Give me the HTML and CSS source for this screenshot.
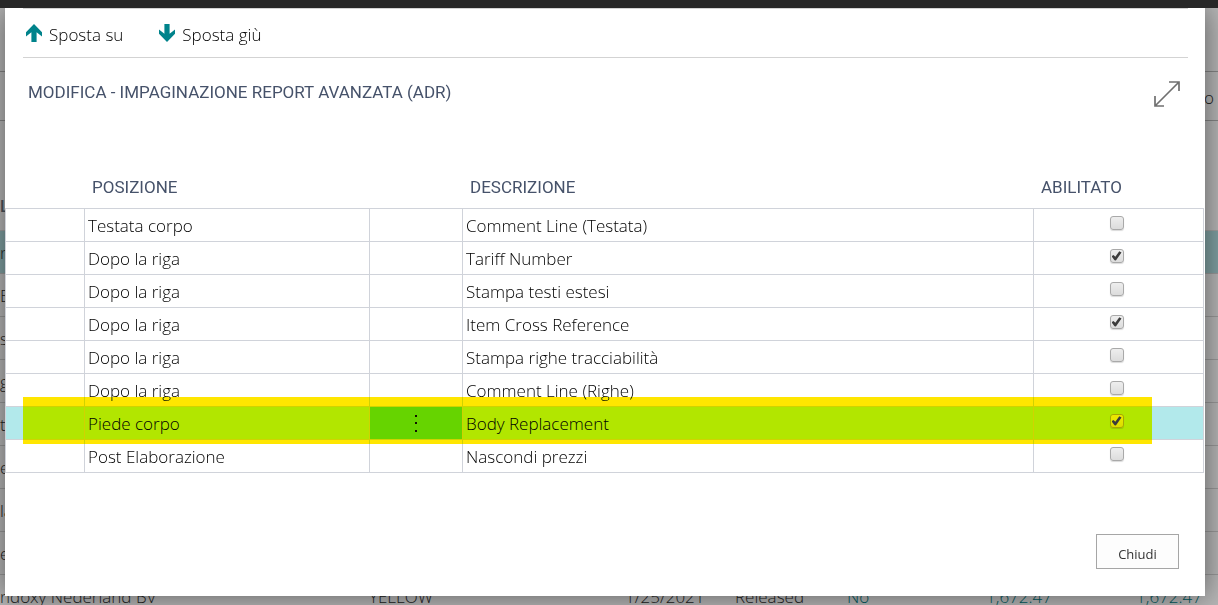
FILE: index.html
```html
<!DOCTYPE html>
<html lang="it">
<head>
<meta charset="utf-8">
<title>Modifica - Impaginazione report avanzata (ADR)</title>
<link rel="stylesheet" href="styles.css">
</head>
<body>
<div class="topbar"></div>
<main class="page" inert>
  <div class="page-band"></div>
  <div class="page-tabs"><span>o</span></div>
  <div class="page-head">L</div>
  <div class="page-row page-row-current">n</div>
  <div class="page-row">E</div>
  <div class="page-row">s</div>
  <div class="page-row">g</div>
  <div class="page-row">t</div>
  <div class="page-row">e</div>
  <div class="page-row">la</div>
  <div class="page-row">ev</div>
  <div class="page-row page-row-full">
    <span>ndoxy Nederland BV</span><span>YELLOW</span><span>1/25/2021</span><span>Released</span><span class="link">No</span><span class="link amount">1,672.47</span><span class="link amount">1,672.47</span>
  </div>
</main>

<section class="dialog" role="dialog" aria-labelledby="dialog-title">
  <div class="toolbar">
    <button class="action" type="button">
      <svg class="action-icon" viewBox="0 0 16 18" aria-hidden="true"><path d="M8 0 16 8.2V12.6L10.6 8.3V18H5.4V8.3L0 12.6V8.2Z"/></svg>
      Sposta su
    </button>
    <button class="action" type="button">
      <svg class="action-icon" viewBox="0 0 16 18" aria-hidden="true"><path d="M8 18 16 9.8V5.4L10.6 9.7V0H5.4V9.7L0 5.4V9.8Z"/></svg>
      Sposta giù
    </button>
  </div>
  <header class="dialog-head">
    <h1 class="dialog-title" id="dialog-title">MODIFICA - IMPAGINAZIONE REPORT AVANZATA (ADR)</h1>
    <button class="expand" type="button" aria-label="Espandi">
      <svg viewBox="0 0 26 26" aria-hidden="true"><path d="M1.5 24.5 24.5 1.5M15 1H25V10M1 15V25H10"/></svg>
    </button>
  </header>
  <table class="grid">
    <colgroup><col class="col-mark"><col class="col-position"><col class="col-menu"><col><col class="col-enabled"></colgroup>
    <thead>
      <tr><th></th><th scope="col">POSIZIONE</th><th></th><th scope="col">DESCRIZIONE</th><th scope="col">ABILITATO</th></tr>
    </thead>
    <tbody>
      <tr><td></td><td>Testata corpo</td><td></td><td>Comment Line (Testata)</td><td class="enabled"><input class="check" type="checkbox" aria-label="Abilitato: Comment Line (Testata)"></td></tr>
      <tr><td></td><td>Dopo la riga</td><td></td><td>Tariff Number</td><td class="enabled"><input class="check" type="checkbox" checked aria-label="Abilitato: Tariff Number"></td></tr>
      <tr><td></td><td>Dopo la riga</td><td></td><td>Stampa testi estesi</td><td class="enabled"><input class="check" type="checkbox" aria-label="Abilitato: Stampa testi estesi"></td></tr>
      <tr><td></td><td>Dopo la riga</td><td></td><td>Item Cross Reference</td><td class="enabled"><input class="check" type="checkbox" checked aria-label="Abilitato: Item Cross Reference"></td></tr>
      <tr><td></td><td>Dopo la riga</td><td></td><td>Stampa righe tracciabilità</td><td class="enabled"><input class="check" type="checkbox" aria-label="Abilitato: Stampa righe tracciabilità"></td></tr>
      <tr><td></td><td>Dopo la riga</td><td></td><td>Comment Line (Righe)</td><td class="enabled"><input class="check" type="checkbox" aria-label="Abilitato: Comment Line (Righe)"></td></tr>
      <tr class="selected"><td><span class="marker"></span></td><td>Piede corpo</td><td class="menu-cell"><button class="row-menu" type="button" aria-label="Altre opzioni"><svg viewBox="0 0 3 17" aria-hidden="true"><path d="M0 0H2V2H0ZM0 7H2V9H0ZM0 15H2V17H0Z"/></svg></button></td><td>Body Replacement</td><td class="enabled"><input class="check" type="checkbox" checked aria-label="Abilitato: Body Replacement"></td></tr>
      <tr><td></td><td>Post Elaborazione</td><td></td><td>Nascondi prezzi</td><td class="enabled"><input class="check" type="checkbox" aria-label="Abilitato: Nascondi prezzi"></td></tr>
    </tbody>
  </table>
  <footer class="dialog-foot"><button class="close" type="button">Chiudi</button></footer>
</section>
</body>
</html>
```

FILE: styles.css
```css
* { box-sizing: border-box; }

body {
  margin: 0;
  height: 100vh;
  overflow: hidden;
  position: relative;
  background: #b6b6b6;
  color: #000;
  font-family: "Open Sans", "Noto Sans", sans-serif;
  font-size: 17px;
  font-weight: 300;
}

button {
  padding: 0;
  border: 0;
  background: none;
  color: inherit;
  font: inherit;
}

.topbar { height: 8px; background: #272727; }

/* Dimmed page behind the dialog */
.page { color: #222; line-height: 43px; }
.page-band { height: 64px; border-bottom: 1px solid #858585; }
.page-tabs {
  display: flex;
  justify-content: flex-end;
  height: 49px;
  padding-right: 4px;
  border-bottom: 1px solid #858585;
  line-height: 51px;
}
.page-head {
  height: 110px;
  padding-top: 64px;
  border-bottom: 1px solid #a0a0a0;
  color: #4d545e;
  font-family: Roboto, sans-serif;
  font-weight: 500;
}
.page-row { height: 43px; border-bottom: 1px solid #999; white-space: nowrap; }
.page-row-current { background: #80a0a2; }
.page-row-full {
  display: grid;
  grid-template-columns: 369px 256px 110px 112px 60px 1fr 150px;
  padding-right: 16px;
  line-height: 44px;
}
.link { color: #005a60; }
.amount { text-align: right; }

/* Dialog */
.dialog {
  position: absolute;
  z-index: 1;
  inset: 8px 13px 9px 5px;
  display: flex;
  flex-direction: column;
  background: #fff;
  box-shadow: 0 0 28px rgba(0, 0, 0, .5);
  clip-path: inset(0 -40px -40px -40px);
}
.toolbar {
  display: flex;
  gap: 36px;
  height: 50px;
  margin: 0 17px 0 18px;
  padding: 2px 3px 0;
  border-top: 1px solid #d3d3d3;
  border-bottom: 1px solid #d3d3d3;
}
.action { display: flex; align-items: center; gap: 7px; }
.action-icon { width: 16px; height: 18px; margin-bottom: 3px; fill: #00838b; }

.dialog-head {
  display: flex;
  justify-content: space-between;
  height: 108px;
  padding: 23px 25px 0 23px;
}
.dialog-title {
  margin: 0;
  color: #46526a;
  font: 400 17px/22px Roboto, sans-serif;
}
.expand { width: 26px; height: 26px; }
.expand svg { display: block; fill: none; stroke: #707070; stroke-width: 1.7; }

.grid {
  width: calc(100% - 1px);
  table-layout: fixed;
  border-collapse: separate;
  border-spacing: 0;
}
.col-mark { width: 80px; }
.col-position { width: 285px; }
.col-menu { width: 93px; }
.col-enabled { width: 170px; }
.grid th {
  height: 43px;
  padding: 0 7px;
  border-bottom: 1px solid #d0d3da;
  color: #46526a;
  font: 400 17px/42px Roboto, sans-serif;
  text-align: left;
}
.grid td {
  height: 33px;
  padding: 1px 3px 0;
  border-right: 1px solid #d0d3da;
  border-bottom: 1px solid #d0d3da;
  line-height: 31px;
}
.grid td:first-child { border-left: 1px solid #d0d3da; }
.grid .enabled { padding: 0 4px 4px 0; text-align: center; line-height: 0; }

.selected { position: relative; }
.grid .selected td { background: #b2e9eb; }
.grid .selected .menu-cell { padding: 0; background: #66d4d8; }
.row-menu { display: flex; justify-content: center; align-items: center; width: 100%; height: 32px; }
.row-menu svg { width: 3px; height: 17px; fill: #111; }

/* Highlighter stroke across the selected row */
.marker {
  position: absolute;
  inset: -10px 52px -4px 18px;
  background: #ffe600;
  mix-blend-mode: darken;
  pointer-events: none;
}

.check {
  appearance: none;
  display: inline-block;
  width: 14px;
  height: 14px;
  margin: 0;
  border: 1px solid #a9a9a9;
  border-radius: 3px;
  background: linear-gradient(#eee, #dcdcdc);
  box-shadow: 0 1px 1px rgba(0, 0, 0, .15);
  vertical-align: middle;
}
.check:checked::after {
  content: "";
  display: block;
  width: 10px;
  height: 10px;
  margin: 1px;
  background: #3c3c3c;
  clip-path: polygon(0 53%, 20% 40%, 38% 58%, 78% 2%, 100% 16%, 44% 96%, 30% 92%);
}

.dialog-foot {
  display: flex;
  justify-content: flex-end;
  margin-top: auto;
  padding: 0 26px 27px;
}
.close {
  min-width: 83px;
  height: 35px;
  padding-top: 4px;
  border: 1px solid #a6a6a6;
  background: #fdfdfd;
  color: #333;
  font-size: 13px;
  font-weight: 400;
}
```
